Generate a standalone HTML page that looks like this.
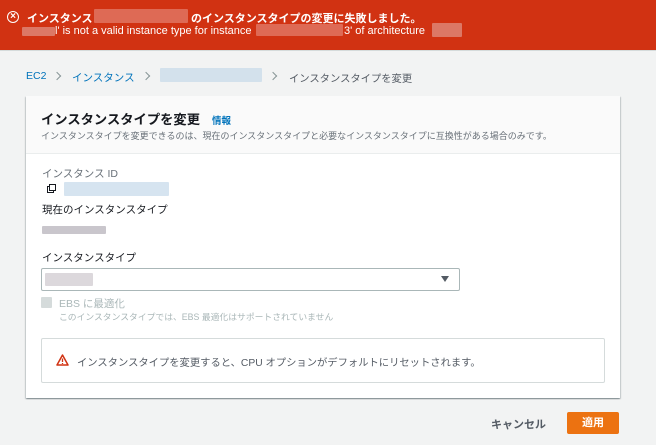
<!DOCTYPE html><html><head><meta charset="utf-8"><style>
*{margin:0;padding:0;box-sizing:border-box}
body{width:656px;height:445px;background:#f2f3f3;font-family:"Liberation Sans","Noto Sans CJK JP",sans-serif;position:relative;overflow:hidden;color:#16191f}
.a{position:absolute;white-space:nowrap}
.blur{position:absolute;border-radius:1px}
.chev{position:absolute;width:6px;height:6px;border-top:1px solid #879596;border-right:1px solid #879596;transform:rotate(45deg)}
</style></head><body>
<div class="a" style="left:0;top:0;width:656px;height:50px;background:#d13212"></div>
<div class="a" style="left:7px;top:11px;width:12px;height:12px;border:1.5px solid #fff;border-radius:50%"></div>
<div class="a" style="left:7px;top:10px;width:12px;text-align:center;color:#fff;font-size:10px;line-height:13px;font-weight:bold">×</div>
<div class="a" style="left:27px;top:10px;color:#fff;font-size:11px;font-weight:bold">インスタンス</div>
<div class="blur" style="left:94px;top:9px;width:94px;height:14px;background:#de6a55"></div>
<div class="a" style="left:191px;top:10px;color:#fff;font-size:11px;font-weight:bold">のインスタンスタイプの変更に失敗しました。</div>
<div class="blur" style="left:22px;top:27px;width:33px;height:9px;background:#dc7866"></div>
<div class="a" style="left:55px;top:25px;color:#fff;font-size:11px">l' is not a valid instance type for instance</div>
<div class="blur" style="left:256px;top:24px;width:87px;height:12px;background:#de6a55"></div>
<div class="a" style="left:344px;top:25px;color:#fff;font-size:11px">3' of architecture</div>
<div class="blur" style="left:432px;top:23px;width:30px;height:14px;background:#dc7866"></div>
<div class="a" style="left:0;top:50px;width:656px;height:1px;background:#d5dbdb"></div>
<div class="a" style="left:26px;top:70px;font-size:10.5px;color:#0073bb">EC2</div>
<div class="chev" style="left:54px;top:73px"></div>
<div class="a" style="left:72px;top:70px;font-size:10.5px;color:#0073bb">インスタンス</div>
<div class="chev" style="left:143px;top:73px"></div>
<div class="blur" style="left:160px;top:68px;width:102px;height:14px;background:#d3e1ec"></div>
<div class="chev" style="left:270px;top:73px"></div>
<div class="a" style="left:289px;top:70px;font-size:10.3px;color:#545b64">インスタンスタイプを変更</div>
<div class="a" style="left:26px;top:96px;width:594px;height:302px;background:#fff;box-shadow:0 1px 1px rgba(0,28,36,.3),1px 1px 1px rgba(0,28,36,.15),-1px 1px 1px rgba(0,28,36,.15)"></div>
<div class="a" style="left:26px;top:96px;width:594px;height:58px;background:#fafafa;border-bottom:1px solid #eaeded"></div>
<div class="a" style="left:41px;top:109px;font-size:13.3px;font-weight:bold">インスタンスタイプを変更</div>
<div class="a" style="left:212px;top:113px;font-size:9.5px;font-weight:bold;color:#0073bb">情報</div>
<div class="a" style="left:41px;top:129px;font-size:9px;color:#687078">インスタンスタイプを変更できるのは、現在のインスタンスタイプと必要なインスタンスタイプに互換性がある場合のみです。</div>
<div class="a" style="left:42px;top:166px;font-size:10.5px;color:#687078">インスタンス ID</div>
<div class="a" style="left:47px;top:186px;width:7px;height:7px;border:1.3px solid #16191f;background:#fff"></div>
<div class="a" style="left:49px;top:184px;width:7px;height:7px;border:1.3px solid #16191f;background:#fff"></div>
<div class="blur" style="left:64px;top:182px;width:105px;height:14px;background:#d6e4f0"></div>
<div class="a" style="left:42px;top:202px;font-size:10.5px;color:#16191f">現在のインスタンスタイプ</div>
<div class="blur" style="left:42px;top:226px;width:64px;height:8px;background:#c9c6cc"></div>
<div class="a" style="left:42px;top:250px;font-size:10.5px;color:#16191f">インスタンスタイプ</div>
<div class="a" style="left:41px;top:268px;width:419px;height:23px;border:1px solid #aab7b8;border-radius:2px;background:#fff"></div>
<div class="blur" style="left:45px;top:273px;width:48px;height:13px;background:#dcd8dc"></div>
<div class="a" style="left:441px;top:276px;width:0;height:0;border-left:4px solid transparent;border-right:4px solid transparent;border-top:6px solid #545b64"></div>
<div class="a" style="left:41px;top:297px;width:11px;height:11px;background:#d5dbdb;border-radius:1px"></div>
<div class="a" style="left:59px;top:296px;font-size:10.5px;color:#aab7b8">EBS に最適化</div>
<div class="a" style="left:59px;top:310px;font-size:8.8px;color:#aab7b8">このインスタンスタイプでは、EBS 最適化はサポートされていません</div>
<div class="a" style="left:41px;top:338px;width:564px;height:45px;border:1px solid #d5dbdb;border-radius:2px"></div>
<svg class="a" style="left:56px;top:354px" width="13" height="12" viewBox="0 0 13 12"><path d="M6.5 1L12 11H1Z" fill="none" stroke="#d13212" stroke-width="1.5" stroke-linejoin="round"/><path d="M6.5 4.5v3.5M6.5 9v1" stroke="#d13212" stroke-width="1.3"/></svg>
<div class="a" style="left:77px;top:354px;font-size:10.3px;color:#545b64">インスタンスタイプを変更すると、CPU オプションがデフォルトにリセットされます。</div>
<div class="a" style="left:491px;top:416px;font-size:11px;font-weight:bold;color:#545b64">キャンセル</div>
<div class="a" style="left:567px;top:412px;width:52px;height:22px;background:#ec7211;border-radius:2px;color:#fff;font-size:11px;font-weight:bold;text-align:center;line-height:22px">適用</div>
</body></html>
